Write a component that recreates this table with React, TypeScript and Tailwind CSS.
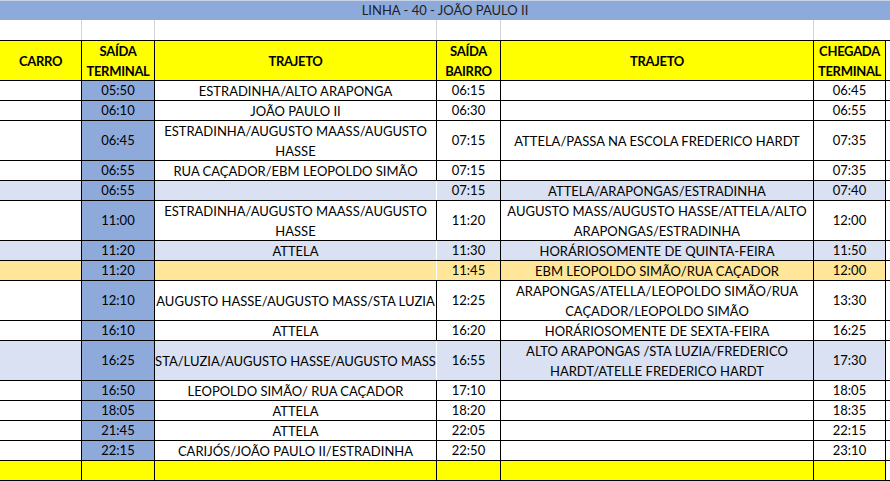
import React from "react";

type Row = {
  t: string;
  a: string[];
  b: string;
  c: string[];
  d: string;
  h?: 40;
  bg?: "light" | "orange" | "yellow";
};

const rows: Row[] = [
  { t: "05:50", a: ["ESTRADINHA/ALTO ARAPONGA"], b: "06:15", c: [], d: "06:45" },
  { t: "06:10", a: ["JOÃO PAULO II"], b: "06:30", c: [], d: "06:55" },
  { t: "06:45", a: ["ESTRADINHA/AUGUSTO MAASS/AUGUSTO", "HASSE"], b: "07:15", c: ["ATTELA/PASSA NA ESCOLA FREDERICO HARDT"], d: "07:35", h: 40 },
  { t: "06:55", a: ["RUA CAÇADOR/EBM LEOPOLDO SIMÃO"], b: "07:15", c: [], d: "07:35" },
  { t: "06:55", a: [], b: "07:15", c: ["ATTELA/ARAPONGAS/ESTRADINHA"], d: "07:40", bg: "light" },
  { t: "11:00", a: ["ESTRADINHA/AUGUSTO MAASS/AUGUSTO", "HASSE"], b: "11:20", c: ["AUGUSTO MASS/AUGUSTO HASSE/ATTELA/ALTO", "ARAPONGAS/ESTRADINHA"], d: "12:00", h: 40 },
  { t: "11:20", a: ["ATTELA"], b: "11:30", c: ["HORÁRIOSOMENTE DE QUINTA-FEIRA"], d: "11:50", bg: "light" },
  { t: "11:20", a: [], b: "11:45", c: ["EBM LEOPOLDO SIMÃO/RUA CAÇADOR"], d: "12:00", bg: "orange" },
  { t: "12:10", a: ["AUGUSTO HASSE/AUGUSTO MASS/STA LUZIA"], b: "12:25", c: ["ARAPONGAS/ATELLA/LEOPOLDO SIMÃO/RUA", "CAÇADOR/LEOPOLDO SIMÃO"], d: "13:30", h: 40 },
  { t: "16:10", a: ["ATTELA"], b: "16:20", c: ["HORÁRIOSOMENTE DE SEXTA-FEIRA"], d: "16:25" },
  { t: "16:25", a: ["STA/LUZIA/AUGUSTO HASSE/AUGUSTO MASS"], b: "16:55", c: ["ALTO ARAPONGAS /STA LUZIA/FREDERICO", "HARDT/ATELLE FREDERICO HARDT"], d: "17:30", h: 40, bg: "light" },
  { t: "16:50", a: ["LEOPOLDO SIMÃO/ RUA CAÇADOR"], b: "17:10", c: [], d: "18:05" },
  { t: "18:05", a: ["ATTELA"], b: "18:20", c: [], d: "18:35" },
  { t: "21:45", a: ["ATTELA"], b: "22:05", c: [], d: "22:15" },
  { t: "22:15", a: ["CARIJÓS/JOÃO PAULO II/ESTRADINHA"], b: "22:50", c: [], d: "23:10" },
];

function Lines({ items }: { items: string[] }) {
  return (
    <div className="flex flex-col items-center leading-[20px] whitespace-nowrap">
      {items.map((s, i) => (
        <span key={i}>{s}</span>
      ))}
    </div>
  );
}

function DataRow({ r }: { r: Row }) {
  const bg =
    r.bg === "light" ? "bg-[#d9e1f2]" : r.bg === "orange" ? "bg-[#ffe699]" : "bg-white";
  const colored = r.bg === "light" || r.bg === "orange";
  const h = r.h === 40 ? "h-[40px]" : "h-[20px]";
  return (
    <div className={`flex ${h} border-t border-black`}>
      <div className={`w-[82px] shrink-0 border-r border-black ${bg}`} />
      <div className="w-[73px] shrink-0 border-r border-black bg-[#8eaadb] flex items-center justify-center">
        {r.t}
      </div>
      <div
        className={`w-[282px] shrink-0 border-r ${colored ? "border-white" : "border-black"} ${bg} flex items-center justify-center`}
      >
        <Lines items={r.a} />
      </div>
      <div className={`w-[64px] shrink-0 border-r border-black ${bg} flex items-center justify-center`}>
        {r.b}
      </div>
      <div className={`w-[313px] shrink-0 border-r border-black ${bg} flex items-center justify-center`}>
        <Lines items={r.c} />
      </div>
      <div className={`w-[72px] shrink-0 border-r border-black ${bg} flex items-center justify-center`}>
        {r.d}
      </div>
      <div className="flex-1 bg-white" />
    </div>
  );
}

export default function App() {
  return (
    <div className="w-[890px] h-[481px] overflow-hidden bg-white text-[13px] text-black [font-family:Lato,'Liberation_Sans',sans-serif]">
      {/* title */}
      <div className="h-[20px] bg-[#8eaadb] border-t border-[#c9d3e6] flex items-center justify-center text-[#1f1f1f]">
        LINHA - 40 - JOÃO PAULO II
      </div>
      {/* blank row */}
      <div className="flex h-[20px] bg-white">
        <div className="w-[82px] border-r border-[#d4d4d4]" />
        <div className="w-[73px] border-r border-[#d4d4d4]" />
        <div className="w-[282px] border-r border-[#d4d4d4]" />
        <div className="w-[64px] border-r border-[#d4d4d4]" />
        <div className="w-[313px] border-r border-[#d4d4d4]" />
        <div className="w-[72px]" />
      </div>
      {/* header */}
      <div className="flex h-[40px] border-t border-black font-bold leading-[20px] tracking-[-0.3px]">
        <div className="w-[82px] shrink-0 border-r border-black bg-[#ffff00] flex items-center justify-center">
          CARRO
        </div>
        <div className="w-[73px] shrink-0 border-r border-black bg-[#ffff00] flex flex-col items-center justify-center">
          <span>SAÍDA</span>
          <span>TERMINAL</span>
        </div>
        <div className="w-[282px] shrink-0 border-r border-black bg-[#ffff00] flex items-center justify-center">
          TRAJETO
        </div>
        <div className="w-[64px] shrink-0 border-r border-black bg-[#ffff00] flex flex-col items-center justify-center">
          <span>SAÍDA</span>
          <span>BAIRRO</span>
        </div>
        <div className="w-[313px] shrink-0 border-r border-black bg-[#ffff00] flex items-center justify-center">
          TRAJETO
        </div>
        <div className="w-[72px] shrink-0 border-r border-black bg-[#ffff00] flex flex-col items-center justify-center">
          <span>CHEGADA</span>
          <span>TERMINAL</span>
        </div>
        <div className="flex-1 bg-white" />
      </div>
      {rows.map((r, i) => (
        <DataRow key={i} r={r} />
      ))}
      {/* final yellow row */}
      <div className="flex h-[21px] border-t border-b border-black">
        <div className="w-[82px] shrink-0 border-r border-black bg-[#ffff00]" />
        <div className="w-[73px] shrink-0 border-r border-black bg-[#ffff00]" />
        <div className="w-[282px] shrink-0 border-r border-black bg-[#ffff00]" />
        <div className="w-[64px] shrink-0 border-r border-black bg-[#ffff00]" />
        <div className="w-[313px] shrink-0 border-r border-black bg-[#ffff00]" />
        <div className="w-[72px] shrink-0 border-r border-black bg-[#ffff00]" />
        <div className="flex-1 bg-white" />
      </div>
    </div>
  );
}
